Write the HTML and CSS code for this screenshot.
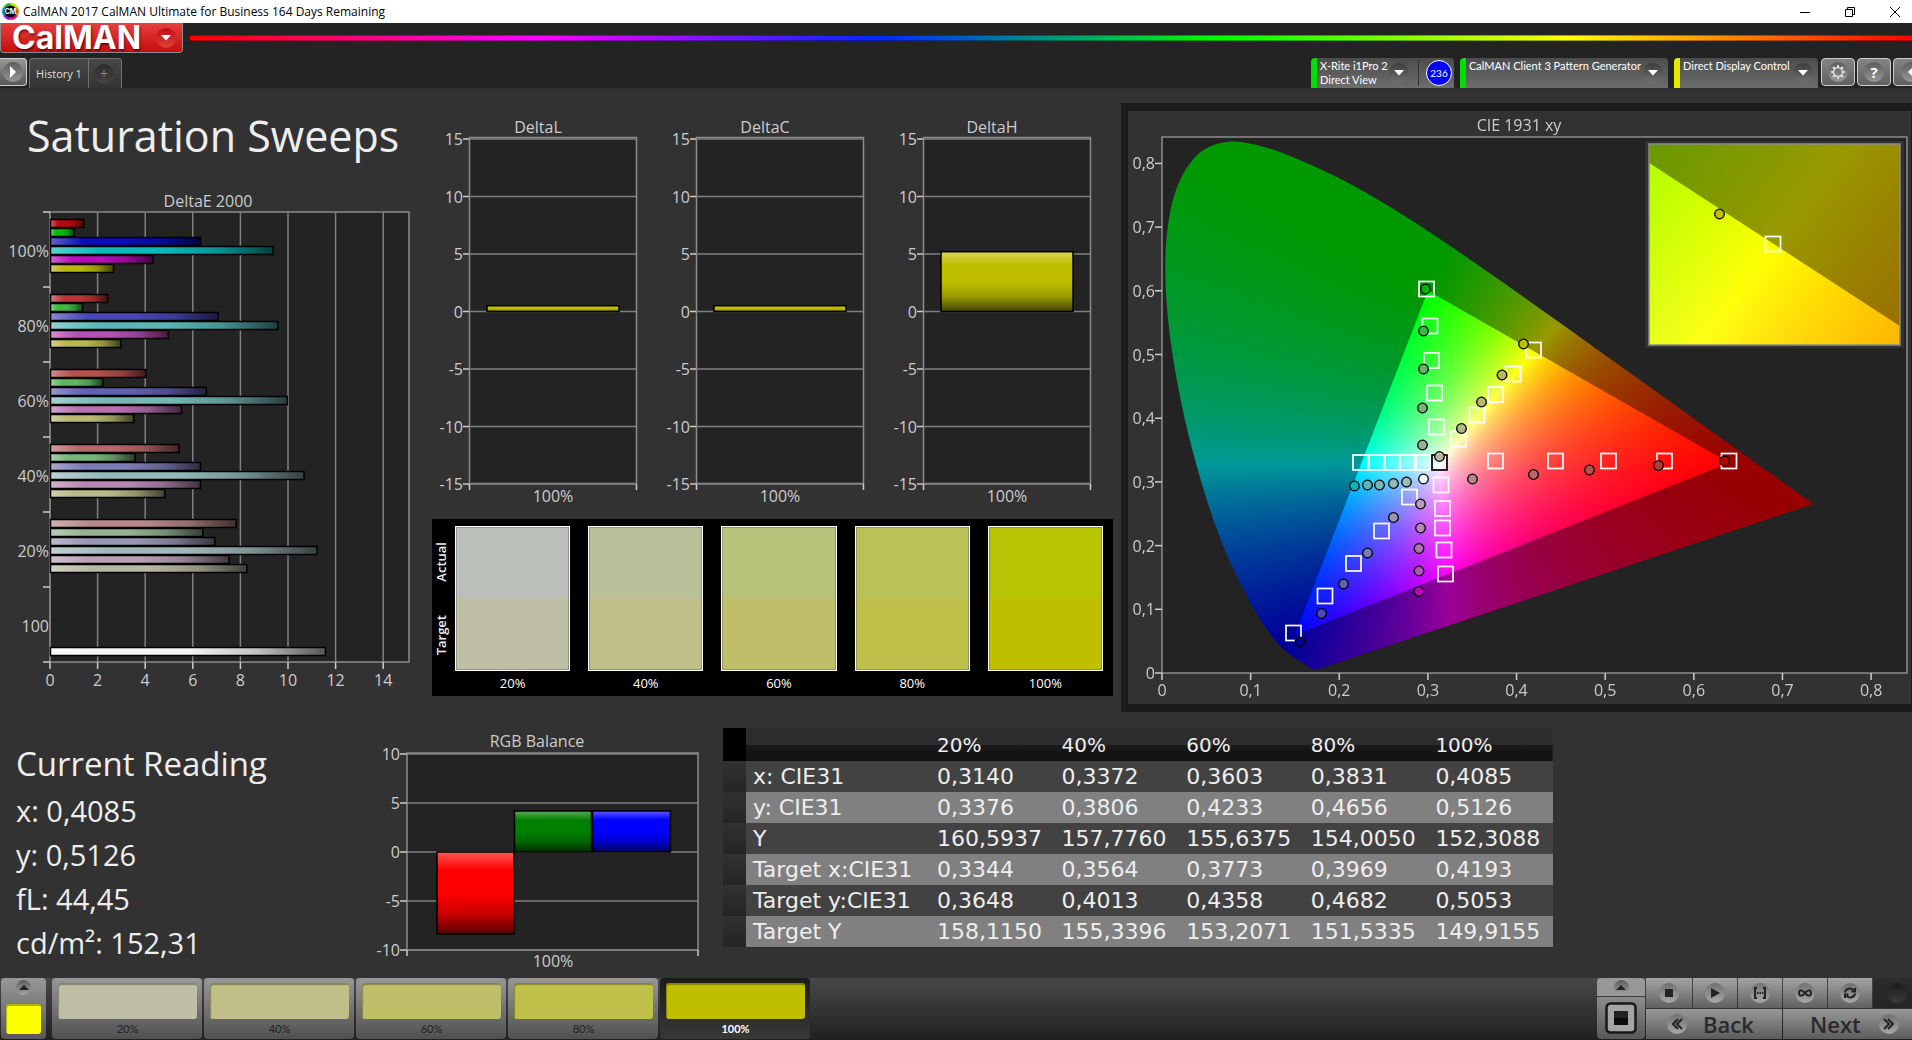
FILE: index.html
```
<!DOCTYPE html>
<html lang="en">

<head>
    <meta charset="utf-8">
    <title>CalMAN 2017 CalMAN Ultimate for Business</title>
    <link rel="stylesheet" href="styles.css">
</head>

<body>
    <div class="titlebar">
        <svg class="app-icon" width="17" height="17" viewBox="0 0 17 17">
            <g fill="none" stroke-width="3">
                <path d="M8.500 1.500a7 7 0 0 1 6 3.500" stroke="#c4d800" />
                <path d="M14.500 5a7 7 0 0 1 0 7" stroke="#f08000" />
                <path d="M14.500 12a7 7 0 0 1 -6 3.500" stroke="#e0106a" />
                <path d="M8.500 15.500a7 7 0 0 1 -6 -3.500" stroke="#a010e0" />
                <path d="M2.500 12a7 7 0 0 1 0 -7" stroke="#1090c0" />
                <path d="M2.500 5a7 7 0 0 1 6 -3.500" stroke="#20b840" />
            </g>
            <circle cx="8.500" cy="8.500" r="6" fill="#000" />
            <text x="8.500" y="11" text-anchor="middle">CM</text>
        </svg>
        <span class="titlebar-text">CalMAN 2017 CalMAN Ultimate for Business 164 Days Remaining</span>
        <button class="win-btn" aria-label="Minimize"><svg width="12" height="12"><path d="M1 6.500h10" /></svg></button>
        <button class="win-btn" aria-label="Restore"><svg width="12" height="12"><path d="M1.500 3.500h7v7h-7zM3.500 3.500v-2h7v7h-2" /></svg></button>
        <button class="win-btn" aria-label="Close"><svg width="12" height="12"><path d="M1 1l10 10M11 1L1 11" /></svg></button>
    </div>

    <header>
        <div class="brand-row">
            <button class="logo">CalMAN
                <span class="knob red-knob"><svg width="10" height="6"><path d="M0 0h10l-5 5.500z" fill="#fff" /></svg></span>
            </button>
            <div class="rainbow"></div>
        </div>
        <div class="tab-row">
            <button class="edge-btn" aria-label="Expand"><span class="knob light"><svg width="6" height="12"><path d="M0 0l6 6l-6 6z" fill="#fff" /></svg></span></button>
            <div class="tabs">
                <button class="tab">History 1</button>
                <button class="tab add" aria-label="Add"><span class="knob dim">+</span></button>
            </div>
            <div class="spacer"></div>
            <button class="device meter green">
                <span class="device-name">X-Rite i1Pro 2<br>Direct View</span>
                <span class="knob"><svg width="10" height="6"><path d="M0 0h10l-5 5.500z" fill="#fff" /></svg></span>
                <span class="divider"></span>
                <span class="count">236</span>
            </button>
            <button class="device source green">
                <span class="device-name">CalMAN Client 3 Pattern Generator</span>
                <span class="knob"><svg width="10" height="6"><path d="M0 0h10l-5 5.500z" fill="#fff" /></svg></span>
            </button>
            <button class="device display yellow">
                <span class="device-name">Direct Display Control</span>
                <span class="knob"><svg width="10" height="6"><path d="M0 0h10l-5 5.500z" fill="#fff" /></svg></span>
            </button>
            <div class="tools">
                <button class="tool" aria-label="Settings"><span class="knob light">
                    <svg width="16" height="16" viewBox="0 0 16 16" fill="none" stroke="#ddd">
                        <circle cx="8" cy="8" r="4.500" stroke-width="1.500" />
                        <path d="M8 1v2.500M8 12.500v2.500M1 8h2.500M12.500 8h2.500M3 3l2 2M11 11l2 2M3 13l2-2M11 5l2-2" stroke-width="2" />
                    </svg></span></button>
                <button class="tool" aria-label="Help"><span class="knob light">?</span></button>
                <button class="tool last" aria-label="Collapse"><span class="knob light"><svg width="6" height="12"><path d="M6 0L0 6l6 6z" fill="#fff" /></svg></span></button>
            </div>
        </div>
    </header>

    <main>
        <div class="upper">
            <section class="sweeps">
                <h1>Saturation Sweeps</h1>
                <svg id="deltaE" class="chart" viewBox="0 190 430 510"></svg>
            </section>

            <section class="deltas">
                <div class="delta-charts">
                    <svg id="deltaL" class="chart" viewBox="0 0 227 400"></svg>
                    <svg id="deltaC" class="chart" viewBox="0 0 227 400"></svg>
                    <svg id="deltaH" class="chart" viewBox="0 0 227 400"></svg>
                </div>
                <div class="compare">
                    <div class="compare-side"><span>Actual</span><span>Target</span></div>
                    <figure><div class="patch p20"></div><figcaption>20%</figcaption></figure>
                    <figure><div class="patch p40"></div><figcaption>40%</figcaption></figure>
                    <figure><div class="patch p60"></div><figcaption>60%</figcaption></figure>
                    <figure><div class="patch p80"></div><figcaption>80%</figcaption></figure>
                    <figure><div class="patch p100"></div><figcaption>100%</figcaption></figure>
                </div>
            </section>

            <section class="cie">
                <canvas id="gamut" width="783" height="593"></canvas>
                <svg id="cie" class="chart" viewBox="1128 111 783 593"></svg>
            </section>
        </div>

        <div class="lower">
            <section class="reading">
                <h2>Current Reading</h2>
                <p>x: 0,4085</p>
                <p>y: 0,5126</p>
                <p>fL: 44,45</p>
                <p>cd/m²: 152,31</p>
            </section>
            <svg id="rgb" class="chart" viewBox="360 728 363 245"></svg>
            <table>
                <thead>
                    <tr><th class="grip"></th><th class="name"></th><th>20%</th><th>40%</th><th>60%</th><th>80%</th><th>100%</th></tr>
                </thead>
                <tbody>
                    <tr><td class="grip"></td><td>x: CIE31</td><td>0,3140</td><td>0,3372</td><td>0,3603</td><td>0,3831</td><td>0,4085</td></tr>
                    <tr><td class="grip"></td><td>y: CIE31</td><td>0,3376</td><td>0,3806</td><td>0,4233</td><td>0,4656</td><td>0,5126</td></tr>
                    <tr><td class="grip"></td><td>Y</td><td>160,5937</td><td>157,7760</td><td>155,6375</td><td>154,0050</td><td>152,3088</td></tr>
                    <tr><td class="grip"></td><td>Target x:CIE31</td><td>0,3344</td><td>0,3564</td><td>0,3773</td><td>0,3969</td><td>0,4193</td></tr>
                    <tr><td class="grip"></td><td>Target y:CIE31</td><td>0,3648</td><td>0,4013</td><td>0,4358</td><td>0,4682</td><td>0,5053</td></tr>
                    <tr><td class="grip"></td><td>Target Y</td><td>158,1150</td><td>155,3396</td><td>153,2071</td><td>151,5335</td><td>149,9155</td></tr>
                </tbody>
            </table>
        </div>
    </main>

    <footer>
        <button class="current" aria-label="Current patch">
            <span class="knob small"><svg width="10" height="5"><path d="M0 5l5-5l5 5z" fill="#222" /></svg></span>
            <span class="chip"></span>
        </button>
        <div class="levels">
            <button class="level l20"><span class="chip"></span>20%</button>
            <button class="level l40"><span class="chip"></span>40%</button>
            <button class="level l60"><span class="chip"></span>60%</button>
            <button class="level l80"><span class="chip"></span>80%</button>
            <button class="level l100 active"><span class="chip"></span>100%</button>
        </div>
        <div class="spacer"></div>
        <div class="window-size">
            <button aria-label="Pattern options"><span class="knob small"><svg width="10" height="5"><path d="M0 5l5-5l5 5z" fill="#222" /></svg></span></button>
            <button aria-label="Pattern window">
                <svg width="32" height="32">
                    <rect x="1.500" y="1.500" width="29" height="29" rx="4" fill="#a4a4a4" stroke="#181818" stroke-width="2.500" />
                    <rect x="9" y="9" width="14" height="14" fill="#0a0a0a" />
                    <rect x="9" y="9" width="14" height="7" fill="#222" />
                </svg>
            </button>
        </div>
        <div class="transport">
            <div class="media">
                <button aria-label="Stop"><span class="knob mid"><svg width="8" height="8"><path d="M0 0h8v8h-8z" fill="#222" /></svg></span></button>
                <button aria-label="Play"><span class="knob mid"><svg width="9" height="10"><path d="M0 0l9 5l-9 5z" fill="#222" /></svg></span></button>
                <button aria-label="Read series"><span class="knob mid"><svg width="12" height="12" fill="none" stroke="#222" stroke-width="2"><path d="M3 1H1v10h2M9 1h2v10h-2M3 6h1.500M5.500 6h1.500M8 6h1.500" /></svg></span></button>
                <button aria-label="Read continuous"><span class="knob mid"><svg width="14" height="8" fill="none" stroke="#222" stroke-width="2"><path d="M7 4C5 1 1 0 1 4s4 3 6 0c2-3 6-4 6 0s-4 3-6 0z" /></svg></span></button>
                <button aria-label="Repeat"><span class="knob mid"><svg width="12" height="12" fill="none" stroke="#222" stroke-width="2"><path d="M1 5.500C1.500 2 6 0 9.500 3M11 1v3.500H7.500M11 6.500C10.500 10 6 12 2.500 9M1 11V7.500h3.500" /></svg></span></button>
                <span class="empty"><span class="knob off"></span></span>
            </div>
            <div class="nav">
                <button><span class="knob mid"><svg width="11" height="12" fill="none" stroke="#222" stroke-width="2"><path d="M6 1L1 6l5 5M10 1L5 6l5 5" /></svg></span>Back</button>
                <button>Next<span class="knob mid"><svg width="11" height="12" fill="none" stroke="#222" stroke-width="2"><path d="M1 1l5 5l-5 5M5 1l5 5l-5 5" /></svg></span></button>
            </div>
        </div>
    </footer>

    <script src="charts.js"></script>
</body>

</html>
```
FILE: styles.css
```
* {
    box-sizing: border-box;
}

body {
    margin: 0;
    min-height: 100vh;
    display: flex;
    flex-direction: column;
    overflow-x: hidden;
    background: #232323;
    color: #eee;
    font-family: "Open Sans", "Noto Sans", sans-serif;
}

button {
    margin: 0;
    padding: 0;
    border: 0;
    background: none;
    color: inherit;
    font-family: inherit;
    cursor: pointer;
}

h1,
h2,
p,
figure {
    margin: 0;
    font-weight: 400;
}

.spacer {
    flex: 1;
}

/* window frame */

.titlebar {
    display: flex;
    align-items: center;
    height: 23px;
    margin-right: -5px;
    padding-left: 2px;
    background: #fff;
    color: #000;
}

.app-icon text {
    font: bold 7px Inter, sans-serif;
    fill: #fff;
}

.titlebar-text {
    flex: 1;
    margin-left: 4px;
    font: 12px "Open Sans", sans-serif;
}

.win-btn {
    width: 45px;
    height: 23px;
}

.win-btn svg {
    display: block;
    margin: 0 auto;
    fill: none;
    stroke: #000;
}

/* header */

.brand-row {
    display: flex;
    align-items: flex-start;
    height: 35px;
}

.logo {
    display: flex;
    align-items: center;
    justify-content: space-between;
    width: 183px;
    height: 30px;
    padding: 0 6px 0 11px;
    border: 1px solid #8c8c8c;
    border-top: 0;
    border-radius: 0 0 4px 4px;
    background: linear-gradient(#e64040, #c80c0c);
    color: #fff;
    font: bold 32px/28px Inter, sans-serif;
    text-shadow: 1px 2px 2px rgba(0, 0, 0, .5);
}

.rainbow {
    flex: 1;
    height: 6px;
    margin: 12px 0 0 7px;
    border: 1px solid rgba(0, 0, 0, .35);
    border-width: 1px 0;
    background: linear-gradient(90deg, #f00, #f0f 20%, #0028ff 40%, #0f0 60%, #ff0 80%, #f00);
}

.knob {
    display: flex;
    align-items: center;
    justify-content: center;
    flex: none;
    width: 20px;
    height: 20px;
    border-radius: 50%;
    background: linear-gradient(#3c3c3c, #707070);
}

.red-knob {
    background: linear-gradient(#c00c14, #e04038);
}

.light {
    background: linear-gradient(#5c5c5c, #989898);
}

.dim {
    background: linear-gradient(#2c2c2c, #444);
    color: #888;
    font-size: 14px;
}

.mid {
    background: linear-gradient(#707070, #a8a8a8);
}

.off {
    background: linear-gradient(#1a1a1a, #3c3c3c);
}

.small {
    width: 15px;
    height: 15px;
    background: linear-gradient(#5c5c5c, #a4a4a4);
}

.tab-row {
    display: flex;
    height: 30px;
}

.edge-btn {
    width: 27px;
    height: 28px;
    padding-left: 3px;
    border: 1px solid #d0d0d0;
    border-left: 0;
    border-radius: 0 4px 4px 0;
    background: linear-gradient(#989898, #585858);
}

.tabs {
    display: flex;
    margin-left: 2px;
    border: 1px solid #707070;
    border-bottom: 0;
    border-radius: 4px 4px 0 0;
    background: linear-gradient(#484848, #333);
}

.tab {
    width: 58px;
    color: #ddd;
    font: 11px "Open Sans", sans-serif;
}

.add {
    width: 33px;
    padding-left: 5px;
    border-left: 1px solid #707070;
}

.device {
    display: flex;
    justify-content: space-between;
    align-items: center;
    height: 30px;
    margin-left: 6px;
    padding: 0 5px 0 3px;
    border-left: 6px solid #00e000;
    border-radius: 4px 4px 0 0;
    background: linear-gradient(#4c4c4c, #6c6c6c);
    color: #fff;
}

.yellow {
    border-left-color: #e8e800;
}

.device-name {
    flex: 1;
    align-self: flex-start;
    padding-top: 1px;
    font: 11px/14px Lato, sans-serif;
    text-align: left;
}

.meter {
    width: 143px;
    padding-right: 2px;
}

.divider {
    width: 1px;
    height: 26px;
    margin: 0 7px 0 9px;
    background: #333;
}

.source {
    width: 208px;
}

.display {
    width: 144px;
}

.count {
    width: 26px;
    height: 26px;
    border: 1px solid #fff;
    border-radius: 50%;
    background: #00f;
    font: 10px/24px Lato, sans-serif;
    text-align: center;
}

.tools {
    display: flex;
    gap: 2px;
    width: 94px;
    padding-left: 3px;
    overflow: hidden;
}

.tool {
    display: flex;
    align-items: center;
    justify-content: center;
    flex: none;
    width: 34px;
    height: 28px;
    border: 1px solid #ccc;
    border-radius: 4px;
    background: linear-gradient(#848484, #606060);
    color: #fff;
    font: bold 15px "Open Sans", sans-serif;
}

.last {
    padding-left: 2px;
}

/* workspace */

main {
    flex: 1;
    border-top: 1px solid #2c2c2c;
    background: #323232;
}

.upper {
    display: grid;
    grid-template-columns: 430fr 691fr 791fr;
}

.lower {
    display: grid;
    grid-template-columns: 360fr 363fr 830fr 359fr;
    align-items: start;
    padding-top: 16px;
}

.chart {
    display: block;
    width: 100%;
    font-size: 16px;
}

.chart text {
    fill: #ccc;
}

h1 {
    padding: 22px 0 29px 27px;
    font-size: 43px;
    line-height: 50px;
    white-space: nowrap;
}

.deltas {
    padding: 22px 8px 0 0;
}

.delta-charts {
    display: grid;
    grid-template-columns: repeat(3, 1fr);
    margin-right: 2px;
}

.compare {
    display: grid;
    grid-template-columns: 5px repeat(5, 1fr);
    column-gap: 18px;
    margin: 8px 0 0 2px;
    padding: 7px 10px 0 0;
    background: #000;
}

.compare-side {
    display: grid;
    grid-template-rows: 1fr 1fr;
    justify-items: start;
    height: 145px;
}

.compare-side span {
    align-self: center;
    width: 18px;
    font-size: 13px;
    font-weight: 600;
    line-height: 18px;
    writing-mode: vertical-rl;
    transform: rotate(180deg);
}

.patch {
    height: 145px;
    border: 1px solid #fff;
    box-shadow: inset 0 0 0 1px rgba(90, 90, 90, .4);
}

figcaption {
    color: #fff;
    font-size: 13px;
    line-height: 25px;
    text-align: center;
}

.p20 {
    background: linear-gradient(#bac0b9 50%, #bfbfa5 50%);
}

.p40 {
    background: linear-gradient(#bac19a 50%, #bfbf87 50%);
}

.p60 {
    background: linear-gradient(#b8c27a 50%, #bfbf6a 50%);
}

.p80 {
    background: linear-gradient(#b9c257 50%, #bfc04a 50%);
}

.p100 {
    background: linear-gradient(#b7c404 50%, #bfbf00 50%);
}

.cie {
    display: grid;
    align-self: start;
    margin-top: 14px;
    border: 8px solid #1b1b1b;
    border-width: 8px 1px 8px 7px;
}

.cie canvas,
.cie svg {
    grid-area: 1 / 1;
    width: 100%;
}

.reading {
    padding: 14px 0 0 16px;
}

h2 {
    margin-bottom: 3px;
    font-size: 33px;
    line-height: 44px;
}

.reading p {
    font-size: 29px;
    line-height: 44px;
}

table {
    width: 100%;
    border-collapse: collapse;
    table-layout: fixed;
    font: 22px "DejaVu Sans", sans-serif;
}

th,
td {
    height: 31px;
    padding: 0 0 0 7px;
    font-weight: 400;
    line-height: 30px;
    text-align: left;
    white-space: nowrap;
}

th {
    height: 33px;
    font-size: 20px;
}

thead tr {
    background: linear-gradient(#2c2c2c 50%, #1a1a1a 50%, #111);
}

tbody tr {
    background: #424242;
}

tbody tr:nth-child(even) {
    background: #808080;
}

.grip {
    width: 23px;
    background: linear-gradient(#323232, #242424);
}

th.grip {
    background: #000;
}

.name {
    width: 184px;
}

/* bottom bar */

footer {
    display: flex;
    height: 62px;
    padding-bottom: 1px;
    background: linear-gradient(#484848, #202020);
}

.current {
    display: flex;
    flex-direction: column;
    align-items: center;
    justify-content: space-between;
    width: 45px;
    margin: 0 6px 0 1px;
    padding: 2px 0 5px;
    border-radius: 4px;
    background: linear-gradient(#989898, #585858);
}

.chip {
    display: block;
    border-radius: 3px;
    box-shadow: inset 1px 2px 1px rgba(0, 0, 0, .3);
}

.current .chip {
    width: 35px;
    height: 30px;
    background: #ff0;
}

.levels {
    display: flex;
    gap: 2px;
}

.level {
    width: 150px;
    padding: 5px 5px 0 6px;
    border-radius: 4px;
    background: linear-gradient(#989898, #505050);
    color: #222;
    font: 11px/20px Lato, sans-serif;
}

.level .chip {
    height: 36px;
}

.level.active {
    background: linear-gradient(#1c1c1c, #383838);
    color: #fff;
    font-weight: bold;
}

.l20 .chip {
    background: #bfbfa5;
}

.l40 .chip {
    background: #bfbf87;
}

.l60 .chip {
    background: #bfbf6a;
}

.l80 .chip {
    background: #bfc04a;
}

.l100 .chip {
    background: #bfbf00;
}

.window-size {
    display: grid;
    grid-template-rows: 18px 1fr;
    gap: 1px;
    width: 48px;
    margin-right: 1px;
}

.window-size button {
    display: flex;
    align-items: center;
    justify-content: center;
    border-radius: 4px 4px 0 0;
    background: #989898;
}

.window-size button:last-child {
    border-radius: 0 0 4px 4px;
    background: linear-gradient(#8c8c8c, #585858);
}

.transport {
    display: grid;
    grid-template-rows: 30px 30px;
    gap: 1px;
}

.media {
    display: grid;
    grid-template-columns: 46px 44px 44px 44px 44px 39px;
    gap: 1px;
}

.media button,
.empty {
    display: flex;
    align-items: center;
    justify-content: center;
    background: linear-gradient(#a4a4a4, #606060);
}

.media .empty {
    justify-content: flex-start;
    padding-left: 14px;
    background: linear-gradient(#2c2c2c, #242424);
}

.nav {
    display: grid;
    grid-template-columns: 136px 129px;
    gap: 1px;
}

.nav button {
    display: flex;
    align-items: center;
    gap: 16px;
    padding-left: 21px;
    background: linear-gradient(#989898, #5c5c5c);
    color: #2a2a2a;
    font: 600 22px/28px "Open Sans", sans-serif;
}

.nav button:last-child {
    gap: 18px;
    padding-left: 27px;
}
```
FILE: charts.js
```
const NS = 'http://www.w3.org/2000/svg';

function add(parent, tag, attrs, text) {
    const el = document.createElementNS(NS, tag);
    for (const k in attrs) el.setAttribute(k, attrs[k]);
    if (text !== undefined) el.textContent = text;
    parent.appendChild(el);
    return el;
}

function gradient(svg, id, horizontal) {
    const g = add(svg, 'linearGradient', horizontal ? { id: id } : { id: id, x1: 0, y1: 0, x2: 0, y2: 1 });
    [[0, '#fff', .35], [.22, '#fff', 0], [.5, '#000', 0], [.75, '#000', .2], [1, '#000', .65]].forEach(s => {
        add(g, 'stop', { offset: s[0], 'stop-color': s[1], 'stop-opacity': s[2] });
    });
}

function bar(svg, x, y, w, h, color, grad) {
    add(svg, 'rect', { x: x, y: y, width: w, height: h, fill: color });
    add(svg, 'rect', { x: x, y: y, width: w, height: h, fill: `url(#${grad})`, stroke: '#000', 'stroke-width': 1.5 });
}

function line(svg, x1, y1, x2, y2, color, width) {
    add(svg, 'path', { d: `M${x1} ${y1}L${x2} ${y2}`, stroke: color || '#808080', 'stroke-width': width || 1.5 });
}

function frame(svg, x, y, w, h, fill) {
    add(svg, 'rect', { x: x, y: y, width: w, height: h, fill: fill || '#232323', stroke: '#8c8c8c', 'stroke-width': 1.5 });
}

function label(svg, x, y, text, anchor) {
    add(svg, 'text', { x: x, y: y, 'text-anchor': anchor || 'middle' }, text);
}

// DeltaE 2000

const sweeps = [
    ['100%', [1.4, 1.0, 6.3, 9.35, 4.3, 2.65], ['#b80c0c', '#0cb80c', '#0c0cb8', '#0cb8b8', '#b80cb8', '#b8b80c']],
    ['80%', [2.4, 1.35, 7.05, 9.55, 4.95, 2.95], ['#b83838', '#40b840', '#4848b8', '#58b8b8', '#b850b8', '#b8b850']],
    ['60%', [4, 2.2, 6.55, 9.95, 5.5, 3.5], ['#b85050', '#60b860', '#6060b4', '#74b8b4', '#b870b4', '#b8b870']],
    ['40%', [5.4, 3.55, 6.3, 10.65, 6.3, 4.8], ['#b86868', '#78b478', '#7c7cb4', '#94b8b8', '#b888b4', '#b8b888']],
    ['20%', [7.8, 6.4, 6.9, 11.2, 7.5, 8.25], ['#b88888', '#94b494', '#9898b4', '#a0b8b8', '#b8a0b8', '#b8b8a0']]
];

function drawDeltaE() {
    const svg = document.getElementById('deltaE');
    const unit = 23.8, row = 75;
    gradient(svg, 'shadeE', true);
    label(svg, 208, 207, 'DeltaE 2000');
    frame(svg, 50, 212, 359, 450);
    for (let v = 0; v <= 14; v += 2) {
        line(svg, 50 + v * unit, 212, 50 + v * unit, 662);
        line(svg, 50 + v * unit, 662, 50 + v * unit, 669, '#ccc');
        label(svg, 50 + v * unit, 686, v);
    }
    for (let i = 0; i <= 6; i++) {
        line(svg, 43, 212 + i * row, 50, 212 + i * row, '#ccc');
    }
    sweeps.forEach((s, i) => {
        label(svg, 49, 257 + i * row, s[0], 'end');
        s[1].forEach((v, j) => bar(svg, 50.500, 219.500 + i * row + j * 9, v * unit, 8, s[2][j], 'shadeE'));
    });
    label(svg, 49, 257 + 5 * row, '100', 'end');
    bar(svg, 50.500, 647.500, 11.55 * unit, 8, '#f4f4f4', 'shadeE');
}

// DeltaL, DeltaC, DeltaH

function drawDelta(id, title, value) {
    const svg = document.getElementById(id);
    gradient(svg, id + 'Shade');
    label(svg, 108, 22, title);
    frame(svg, 39.500, 26.500, 167, 346);
    for (let v = 15; v >= -15; v -= 5) {
        const y = 200.500 - v * 11.5;
        line(svg, 39, y, 206, y);
        line(svg, 33, y, 39, y, '#ccc');
        label(svg, 33, y + 6, v, 'end');
    }
    line(svg, 39.500, 373, 39.500, 379, '#ccc');
    line(svg, 206.500, 373, 206.500, 379, '#ccc');
    bar(svg, 57, 200.500 - value * 11.5, 132, value * 11.5, '#bfbf00', id + 'Shade');
    label(svg, 123, 391, '100%');
}

// RGB balance

function drawRgb() {
    const svg = document.getElementById('rgb');
    gradient(svg, 'rgbShade');
    label(svg, 537, 747, 'RGB Balance');
    frame(svg, 407, 753, 291, 197);
    for (let v = 10; v >= -10; v -= 5) {
        const y = 852 - v * 9.8;
        line(svg, 407, y, 698, y);
        line(svg, 400, y, 407, y, '#ccc');
        label(svg, 400, y + 6, v, 'end');
    }
    line(svg, 407, 950, 407, 956, '#ccc');
    line(svg, 698, 950, 698, 956, '#ccc');
    bar(svg, 437, 852, 77, 82, '#f00', 'rgbShade');
    bar(svg, 514.500, 811, 77, 41, '#008000', 'rgbShade');
    bar(svg, 592.500, 811, 78, 41, '#00f', 'rgbShade');
    label(svg, 553, 967, '100%');
}

// CIE 1931 chromaticity diagram

const locus = [
    [.1741, .005], [.1714, .0051], [.1689, .0069], [.1644, .0109], [.1566, .0177], [.151, .0227], [.144, .0297],
    [.1355, .0399], [.1241, .0578], [.1096, .0868], [.0913, .1327], [.0687, .2007], [.0454, .295], [.0235, .4127],
    [.0082, .5384], [.0039, .6548], [.0139, .7502], [.0389, .812], [.0743, .8338], [.1142, .8262], [.1547, .8059],
    [.1929, .7816], [.2296, .7543], [.2658, .7243], [.3016, .6923], [.3373, .6589], [.3731, .6245], [.4087, .5896],
    [.4441, .5547], [.4788, .5202], [.5125, .4866], [.5752, .4242], [.627, .3725], [.6658, .334], [.6915, .3083],
    [.719, .2809], [.7347, .2653]
];
const rec709 = [[.64, .33], [.3, .6], [.15, .06]];

function xyToRgb(x, y) {
    const X = x / y, Z = (1 - x - y) / y;
    const rgb = [
        3.2406 * X - 1.5372 - .4986 * Z,
        -.9689 * X + 1.8758 + .0415 * Z,
        .0557 * X - .204 + 1.057 * Z
    ].map(c => Math.max(c, 0));
    const max = Math.max(...rgb);
    return rgb.map(c => 255 * c / max);
}

function colorLayer(box, view, dim) {
    const c = document.createElement('canvas');
    c.width = box.w;
    c.height = box.h;
    const img = c.getContext('2d').createImageData(box.w, box.h);
    let p = 0;
    for (let j = 0; j < box.h; j++) {
        for (let i = 0; i < box.w; i++) {
            const y = Math.max((view.y - box.y - j) / view.sy, .001);
            const rgb = xyToRgb((box.x + i - view.x) / view.sx, y);
            for (let k = 0; k < 3; k++) img.data[p++] = rgb[k] * dim;
            img.data[p++] = 255;
        }
    }
    c.getContext('2d').putImageData(img, 0, 0);
    return c;
}

function outline(pts, view, smooth) {
    const q = pts.map(p => [view.x + p[0] * view.sx, view.y - p[1] * view.sy]);
    const path = new Path2D();
    path.moveTo(q[0][0], q[0][1]);
    for (let i = 1; i < q.length; i++) {
        if (smooth) {
            const a = q[Math.max(i - 2, 0)], b = q[i - 1], c = q[i], d = q[Math.min(i + 1, q.length - 1)];
            path.bezierCurveTo(b[0] + (c[0] - a[0]) / 6, b[1] + (c[1] - a[1]) / 6,
                c[0] - (d[0] - b[0]) / 6, c[1] - (d[1] - b[1]) / 6, c[0], c[1]);
        } else {
            path.lineTo(q[i][0], q[i][1]);
        }
    }
    path.closePath();
    return path;
}

// view: origin of the plane in pixels and pixels per unit on each axis
function paintPlane(ctx, box, view) {
    ctx.save();
    ctx.clip(outline(locus, view, true));
    ctx.drawImage(colorLayer(box, view, .6), box.x, box.y);
    ctx.restore();
    ctx.save();
    ctx.clip(outline(rec709, view, false));
    ctx.drawImage(colorLayer(box, view, 1), box.x, box.y);
    ctx.restore();
}

const targets = [
    [1426.5, 289], [1430, 326], [1431.5, 360.5], [1434.5, 393], [1436.5, 427],
    [1533.5, 350], [1513, 374], [1495.5, 394.5], [1477, 415], [1458.5, 439],
    [1360.5, 462.5], [1376.5, 462.5], [1392.5, 462.5], [1407.5, 462.5], [1423.5, 462.5],
    [1495.5, 461], [1555.5, 461], [1608.5, 461], [1664.5, 461], [1729, 461],
    [1441, 485], [1442.5, 508.5], [1442.5, 528], [1444, 550], [1445.5, 574],
    [1409.5, 497], [1381.5, 531], [1353.5, 563.5], [1325, 596], [1293.5, 633]
];
const readings = [
    [1425.5, 289, '#00b400'], [1423.5, 331, '#40b840'], [1423.5, 369, '#60b860'], [1422.5, 408, '#78b478'], [1422.5, 445, '#94b494'],
    [1523.5, 344, '#bfbf00'], [1502, 375, '#b8b850'], [1481.5, 402, '#b8b870'], [1461.5, 428.5, '#b8b888'], [1439.5, 456.5, '#b8b8a0'],
    [1724.5, 461, '#b80000'], [1658.5, 465.5, '#b83838'], [1589.5, 470, '#b85050'], [1533.5, 474.5, '#b86868'], [1472.5, 479, '#b88888'],
    [1354.5, 486, '#00b8b8'], [1367.5, 485, '#58b8b8'], [1379.5, 485, '#74b8b4'], [1393.5, 483.5, '#94b8b8'], [1406.5, 482, '#a0b8b8'],
    [1419, 591.5, '#c000c0'], [1419, 571, '#b850b8'], [1419, 548.5, '#b870b4'], [1420.5, 528, '#b888b4'], [1420.5, 504, '#b8a0b8'],
    [1300, 642, '#0000a0'], [1321.5, 613.5, '#4848b8'], [1343.5, 584, '#6060b4'], [1367.5, 553, '#7c7cb4'], [1393.5, 517.5, '#9898b4'],
    [1423.5, 479, '#fff']
];

function square(svg, x, y, color) {
    add(svg, 'rect', { x: x - 7.5, y: y - 7.5, width: 15, height: 15, fill: 'none', stroke: color, 'stroke-width': 1.7 });
}

function dot(svg, x, y, color) {
    add(svg, 'circle', { cx: x, cy: y, r: 4.8, fill: color, stroke: '#000', 'stroke-width': 1.3 });
}

function drawCie() {
    const ctx = document.getElementById('gamut').getContext('2d');
    const svg = document.getElementById('cie');

    ctx.translate(-1128, -111);
    ctx.fillStyle = '#232323';
    ctx.fillRect(1162, 137, 745, 536);
    paintPlane(ctx, { x: 1162, y: 137, w: 745, h: 536 }, { x: 1162, y: 673, sx: 886.4, sy: 637 });
    ctx.fillStyle = '#323232';
    ctx.fillRect(1645, 141, 259, 207);
    paintPlane(ctx, { x: 1649, y: 144, w: 251, h: 201 }, { x: 1774 - .4193 * 4935, y: 244 + .5053 * 4041, sx: 4935, sy: 4041 });

    label(svg, 1519, 131, 'CIE 1931 xy');
    frame(svg, 1162, 137, 745, 536, 'none');
    frame(svg, 1649, 144, 251, 201, 'none');
    for (let i = 0; i <= 8; i++) {
        const text = i ? '0,' + i : '0';
        const x = 1162 + i * 88.64, y = 673 - i * 63.7;
        line(svg, x, 673, x, 680, '#ccc');
        label(svg, x, 696, text);
        line(svg, 1155, y, 1162, y, '#ccc');
        label(svg, 1155, y + 6, text, 'end');
    }
    targets.forEach(t => square(svg, t[0], t[1], '#fff'));
    square(svg, 1439.5, 462.5, '#000');
    readings.forEach(r => dot(svg, r[0], r[1], r[2]));
    dot(svg, 1719.5, 214, '#bfbf00');
    square(svg, 1773, 244, '#fff');
}

drawDeltaE();
drawDelta('deltaL', 'DeltaL', .5);
drawDelta('deltaC', 'DeltaC', .5);
drawDelta('deltaH', 'DeltaH', 5.2);
drawRgb();
drawCie();
```
